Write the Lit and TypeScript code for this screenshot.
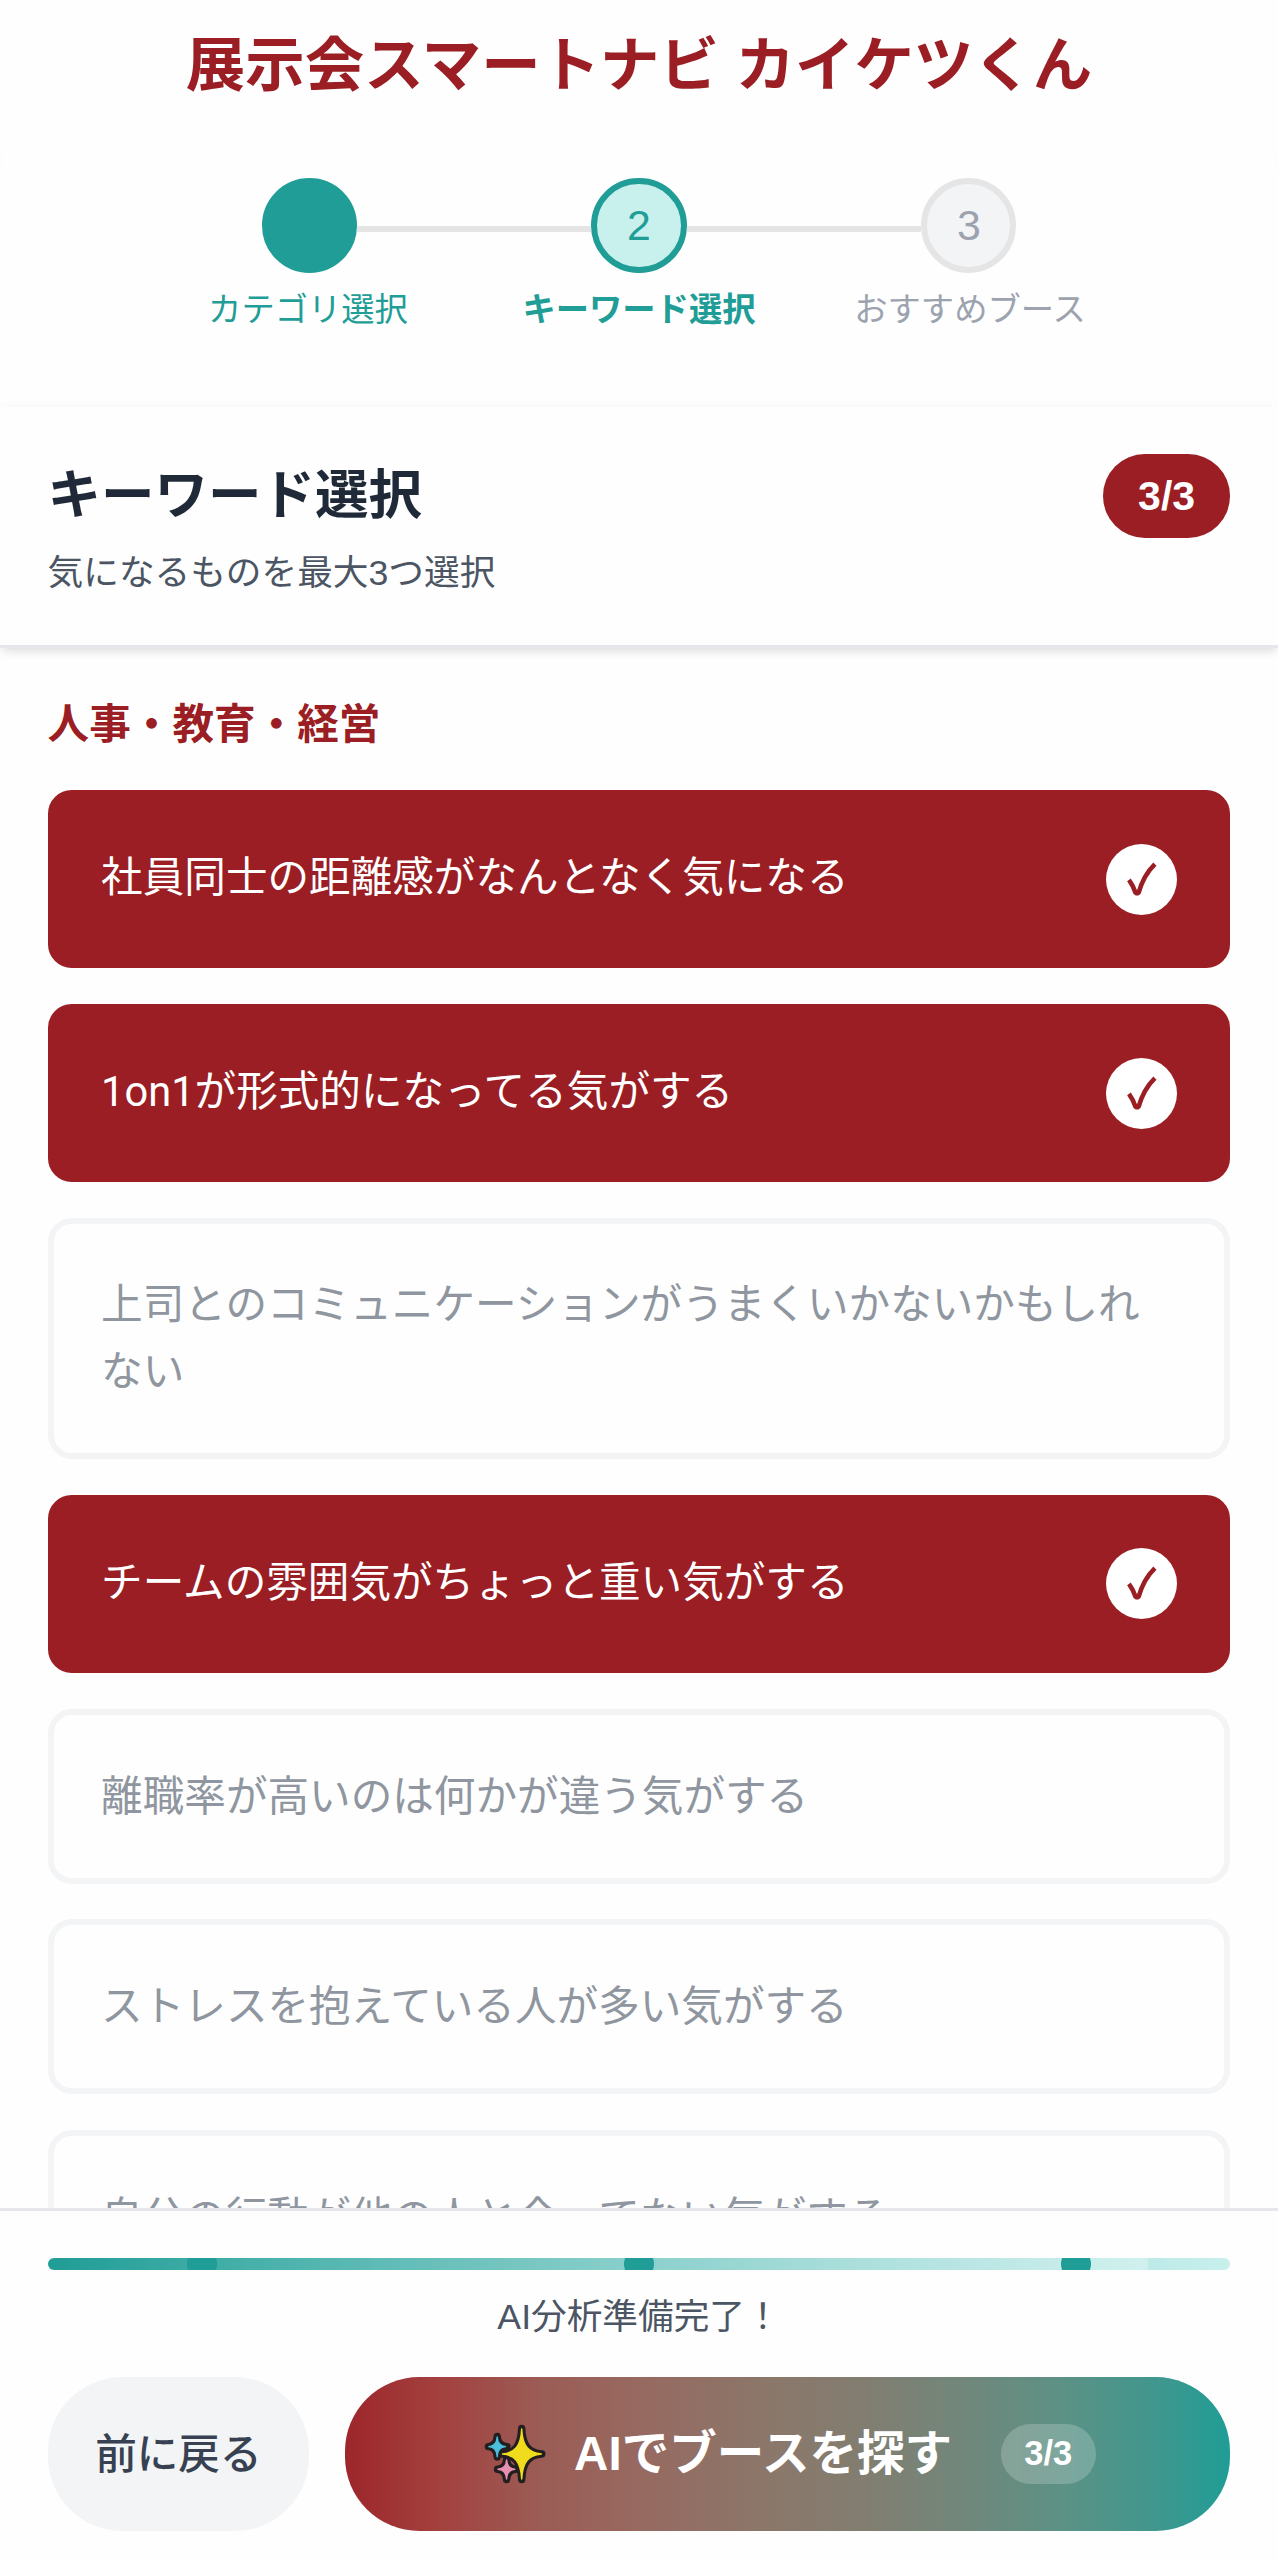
import { LitElement, html, css, nothing } from "lit";
import { customElement, property } from "lit/decorators.js";
import { classMap } from "lit/directives/class-map.js";

interface Keyword {
  label: string;
  selected: boolean;
}

const KEYWORDS: Keyword[] = [
  { label: "社員同士の距離感がなんとなく気になる", selected: true },
  { label: "1on1が形式的になってる気がする", selected: true },
  { label: "上司とのコミュニケーションがうまくいかないかもしれない", selected: false },
  { label: "チームの雰囲気がちょっと重い気がする", selected: true },
  { label: "離職率が高いのは何かが違う気がする", selected: false },
  { label: "ストレスを抱えている人が多い気がする", selected: false },
  { label: "自分の行動が他の人と合ってない気がする", selected: false },
];

@customElement("step-progress")
class StepProgress extends LitElement {
  static styles = css`
    :host {
      display: flex;
      justify-content: center;
      padding-top: 51px;
    }
    .step {
      width: 329.8px;
      display: flex;
      flex-direction: column;
      align-items: center;
      color: #9ca3af;
    }
    .track {
      display: flex;
      align-self: stretch;
      align-items: flex-start;
    }
    .line {
      flex: 1;
      height: 6px;
      margin-top: 48px;
      background: #e5e5e5;
    }
    .line.blank {
      background: none;
    }
    .circle {
      box-sizing: border-box;
      width: 95.1px;
      height: 95.1px;
      border-radius: 50%;
      border: 6px solid #e5e5e5;
      background: #f3f4f6;
      display: flex;
      align-items: center;
      justify-content: center;
      font-size: 42.8px;
    }
    .label {
      margin-top: 12.5px;
      font-size: 33.3px;
      line-height: 48px;
      white-space: nowrap;
    }
    .done .label {
      margin-right: 2.4px;
    }
    .todo .label {
      margin-left: 2.4px;
    }
    .done,
    .active {
      color: #1f9d96;
    }
    .done .circle {
      background: #1f9d96;
      border-color: #1f9d96;
    }
    .active .circle {
      background: #c8f0ed;
      border-color: #1f9d96;
    }
    .active .label {
      font-weight: 700;
    }
  `;

  render() {
    const steps = [
      { text: "", label: "カテゴリ選択", state: "done" },
      { text: "2", label: "キーワード選択", state: "active" },
      { text: "3", label: "おすすめブース", state: "todo" },
    ];
    return steps.map(
      (s, i) => html`
        <div class="step ${s.state}">
          <div class="track">
            <div class=${classMap({ line: true, blank: i === 0 })}></div>
            <div class="circle">${s.text}</div>
            <div class=${classMap({ line: true, blank: i === steps.length - 1 })}></div>
          </div>
          <div class="label">${s.label}</div>
        </div>
      `
    );
  }
}

@customElement("keyword-card")
class KeywordCard extends LitElement {
  @property({ attribute: false }) keyword!: Keyword;

  static styles = css`
    :host {
      display: block;
    }
    .card {
      box-sizing: border-box;
      min-height: 175px;
      display: flex;
      align-items: center;
      justify-content: space-between;
      border: 6px solid #f3f4f6;
      border-radius: 23.8px;
      padding: 47.5px;
      color: #8f969f;
      font-family: Roboto, "Noto Sans CJK JP", sans-serif;
      font-size: 41.6px;
      line-height: 67px;
      font-weight: 400;
      background: #fefefe;
    }
    .selected {
      background: #9a1e23;
      border-color: #9a1e23;
      color: #fff;
    }
    .selected .text {
      padding-bottom: 3px;
    }
    .check {
      flex: none;
      width: 71.3px;
      height: 71.3px;
      border-radius: 50%;
      background: #fff;
    }
    .check svg {
      display: block;
      width: 100%;
      height: 100%;
    }
  `;

  render() {
    const { label, selected } = this.keyword;
    return html`
      <div class=${classMap({ card: true, selected })}>
        <span class="text">${label}</span>
        ${selected
          ? html`<span class="check">
              <svg viewBox="0 0 72 72" fill="none" stroke="#9a1e23" stroke-width="4.6" stroke-linejoin="bevel">
                <path d="M23.2 36.2C26 40 28.2 44.6 30 49.6H32.8C36 38.4 41.5 28 49.4 20.4" />
              </svg>
            </span>`
          : nothing}
      </div>
    `;
  }
}

@customElement("analysis-footer")
class AnalysisFooter extends LitElement {
  static styles = css`
    :host {
      display: block;
      box-sizing: border-box;
      height: 352.5px;
      padding: 47.5px 47.6px 0;
      border-top: 3px solid #e5e7eb;
      background: #fefefe;
    }
    .bar {
      box-sizing: border-box;
      height: 12px;
      border-radius: 6px;
      overflow: hidden;
      display: flex;
      align-items: center;
      justify-content: space-between;
      padding: 0 139.7px;
      background:
        linear-gradient(90deg, rgba(255, 255, 255, 0) 0%, rgba(255, 255, 255, 0.3) 100%) 0 0 / 1099.8px 100% no-repeat,
        linear-gradient(90deg, #1f9d96, #c8f0ed);
    }
    .dot {
      flex: none;
      width: 29.7px;
      height: 29.7px;
      border-radius: 50%;
      background: #1f9d96;
    }
    .status {
      margin-top: 19px;
      text-align: center;
      font-size: 35.66px;
      line-height: 57px;
      color: #4b5563;
    }
    .actions {
      margin-top: 30.5px;
      display: flex;
      gap: 35.6px;
    }
    .back,
    .go {
      box-sizing: border-box;
      height: 154.5px;
      border-radius: 74.3px;
      border: none;
      font-family: inherit;
      display: flex;
      align-items: center;
      justify-content: center;
      white-space: nowrap;
    }
    .back {
      width: 261.5px;
      background: #f3f4f6;
      color: #374151;
      font-size: 41.6px;
      font-weight: 500;
      padding: 0 0 6px;
    }
    .go {
      flex: 1;
      padding: 0;
      color: #fff;
      font-size: 47.55px;
      font-weight: 700;
      background: linear-gradient(
        90deg,
        #9d262b 0%,
        #a3413f 10.8%,
        #9b5c55 22%,
        #976960 33%,
        #8a786b 49%,
        #827d70 58%,
        #71877b 70%,
        #5d9185 81%,
        #3f978e 92%,
        #1f9d96 100%
      );
    }
    .go-label {
      padding-bottom: 8px;
    }
    .spark {
      width: 72px;
      height: 72px;
      margin-right: 22.8px;
    }
    .count {
      margin-left: 48.5px;
      width: 95.2px;
      height: 60px;
      border-radius: 30px;
      background: rgba(255, 255, 255, 0.2);
      font-size: 34.5px;
      display: flex;
      align-items: center;
      justify-content: center;
    }
  `;

  render() {
    return html`
      <div class="bar">
        <span class="dot"></span><span class="dot"></span><span class="dot"></span>
      </div>
      <div class="status">AI分析準備完了！</div>
      <div class="actions">
        <button class="back">前に戻る</button>
        <button class="go">
          <svg class="spark" viewBox="478 2418 72 72" stroke-linejoin="round">
            <g stroke="#231f20" stroke-width="7.4" fill="#231f20">
              <path d="M496.2 2436.5Q496.6 2446 506 2446.6Q496.6 2447.2 496.2 2457Q495.8 2447.2 487.4 2446.6Q495.8 2446 496.2 2436.5Z" />
              <path d="M505.6 2459.5Q506 2468.6 514.5 2469.2Q506 2469.8 505.6 2479.6Q505.2 2469.8 496.5 2469.2Q505.2 2468.6 505.6 2459.5Z" />
              <path d="M520.7 2428.5C521.5 2446 527.5 2453 540.8 2454C527.5 2455 521.5 2462 520.7 2479.5C519.9 2462 513.9 2455 501.5 2454C513.9 2453 519.9 2446 520.7 2428.5Z" />
            </g>
            <path fill="#4cc0dc" stroke="#4cc0dc" stroke-width="1.4" d="M496.2 2437Q496.6 2446 504.5 2446.6Q496.6 2447.2 496.2 2456.6Q495.8 2447.2 487.8 2446.6Q495.8 2446 496.2 2437Z" />
            <path fill="#e78fb0" stroke="#e78fb0" stroke-width="1.4" d="M505.6 2460Q506 2468.6 513.8 2469.2Q506 2469.8 505.6 2479Q505.2 2469.8 497 2469.2Q505.2 2468.6 505.6 2460Z" />
            <path fill="#f0dc1c" stroke="#f0dc1c" stroke-width="1.4" d="M520.7 2429C521.5 2446 527.5 2453 540.3 2454C527.5 2455 521.5 2462 520.7 2479C519.9 2462 513.9 2455 501.5 2454C513.9 2453 519.9 2446 520.7 2429Z" />
          </svg>
          <span class="go-label">AIでブースを探す</span>
          <span class="count">3/3</span>
        </button>
      </div>
    `;
  }
}

@customElement("app-root")
class AppRoot extends LitElement {
  static styles = css`
    :host {
      display: flex;
      flex-direction: column;
      height: 2560px;
      overflow: hidden;
      background: #fefefe;
      font-family: "Liberation Sans", "Noto Sans CJK JP", sans-serif;
    }
    .title {
      margin: 0;
      height: 127px;
      box-sizing: border-box;
      padding-top: 22px;
      text-align: center;
      font-size: 59.44px;
      line-height: 88px;
      font-weight: 700;
      color: #9a1e23;
    }
    .panel {
      flex: 1;
      min-height: 0;
      display: flex;
      flex-direction: column;
      border-radius: 47.5px 47.5px 0 0;
      background: #fefefe;
      box-shadow: 0 12px 18px rgba(0, 0, 0, 0.03);
    }
    .steps {
      height: 279.6px;
      box-sizing: border-box;
      flex: none;
    }
    .head {
      flex: none;
      position: relative;
      z-index: 1;
      box-sizing: border-box;
      height: 241.5px;
      padding: 47.5px 47.6px 0;
      display: flex;
      justify-content: space-between;
      align-items: flex-start;
      background: #fefefe;
      border-bottom: 3px solid #e5e7eb;
      box-shadow: 0 3px 12px rgba(0, 0, 0, 0.06), 0 5px 9px -3px rgba(0, 0, 0, 0.1);
    }
    .heading {
      margin: 0;
      padding-top: 1.5px;
      font-size: 53.5px;
      line-height: 80px;
      font-weight: 700;
      color: #1f2937;
    }
    .hint {
      margin: 9.5px 0 0;
      font-size: 35.66px;
      line-height: 57px;
      color: #4b5563;
    }
    .badge {
      box-sizing: border-box;
      width: 127.6px;
      height: 83.7px;
      padding-top: 2px;
      border-radius: 41.9px;
      background: #9a1e23;
      color: #fff;
      font-size: 41px;
      font-weight: 700;
      display: flex;
      align-items: center;
      justify-content: center;
    }
    .list {
      flex: 1;
      min-height: 0;
      overflow: hidden;
      padding: 45px 47.6px 0;
      display: flex;
      flex-direction: column;
      gap: 35.66px;
    }
    .category {
      margin: 0 0 -3px;
      font-size: 41.6px;
      line-height: 64.3px;
      font-weight: 700;
      color: #9a1e23;
    }
    keyword-card {
      flex: none;
    }
    analysis-footer {
      flex: none;
    }
  `;

  render() {
    return html`
      <h1 class="title">展示会スマートナビ カイケツくん</h1>
      <div class="panel">
        <step-progress class="steps"></step-progress>
        <div class="head">
          <div>
            <h2 class="heading">キーワード選択</h2>
            <p class="hint">気になるものを最大3つ選択</p>
          </div>
          <span class="badge">3/3</span>
        </div>
        <div class="list">
          <h3 class="category">人事・教育・経営</h3>
          ${KEYWORDS.map((k) => html`<keyword-card .keyword=${k}></keyword-card>`)}
        </div>
        <analysis-footer></analysis-footer>
      </div>
    `;
  }
}
